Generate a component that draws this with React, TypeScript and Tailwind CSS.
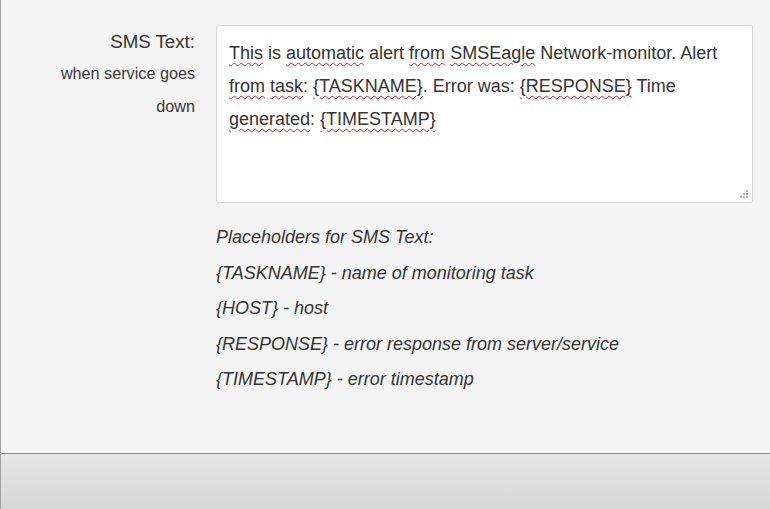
import React from 'react';

const W = ({ children }: { children: React.ReactNode }) => (
  <span className="underline decoration-wavy decoration-[#e02020] decoration-1 underline-offset-[3px]">{children}</span>
);

const placeholders = [
  'Placeholders for SMS Text:',
  '{TASKNAME} - name of monitoring task',
  '{HOST} - host',
  '{RESPONSE} - error response from server/service',
  '{TIMESTAMP} - error timestamp',
];

export default function App() {
  return (
    <div className="w-[770px] h-[509px] flex flex-col bg-[#f4f4f4] border-l border-[#a0a0a0] text-[#333] font-['Liberation_Sans',Arial,sans-serif] overflow-hidden">
      <div className="flex-1 flex pt-[25px]">
        {/* label column */}
        <div className="w-[194px] shrink-0 text-right">
          <div className="text-[18.7px] leading-[31px] pt-[1px]">SMS Text:</div>
          <div className="text-[16.2px] leading-[33px] text-[#3a3a3a]">
            when service goes
            <br />
            down
          </div>
        </div>

        <div className="ml-[21px] w-[537px] flex flex-col">
          <div className="relative h-[178px] bg-white border border-[#d6d6d6] rounded-[2px] px-[12px] pt-[11px] text-[18px] leading-[33px] text-[#333]">
            <W>This</W> is <W>automatic</W> alert <W>from</W> <W>SMSEagle</W> Network-monitor. Alert <W>from</W> <W>task</W>: <W>{'{TASKNAME}'}</W>. Error was: <W>{'{RESPONSE}'}</W> Time <W>generated</W>: <W>{'{TIMESTAMP}'}</W>
            <svg className="absolute right-[3px] bottom-[3px]" width="10" height="10" viewBox="0 0 10 10">
              <g fill="#b4b4b4">
                <rect x="7" y="1" width="2" height="2" />
                <rect x="4" y="4" width="2" height="2" />
                <rect x="7" y="4" width="2" height="2" />
                <rect x="1" y="7" width="2" height="2" />
                <rect x="4" y="7" width="2" height="2" />
                <rect x="7" y="7" width="2" height="2" />
              </g>
            </svg>
          </div>

          <div className="mt-[17px] italic text-[18px] leading-[35.5px] text-[#333]">
            {placeholders.map((p) => (
              <div key={p}>{p}</div>
            ))}
          </div>
        </div>
      </div>

      {/* bottom bar */}
      <div className="h-[56px] shrink-0 border-t border-[#8a8a8a] bg-gradient-to-b from-[#e6e6e6] to-[#d7d7d7]" />
    </div>
  );
}
